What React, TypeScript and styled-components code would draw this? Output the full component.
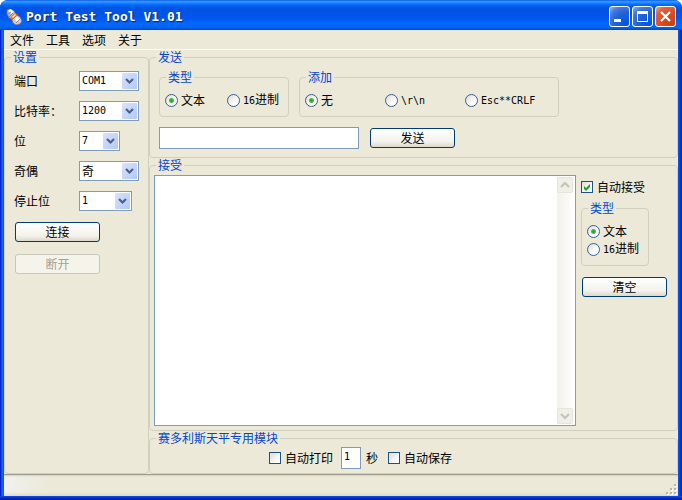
import React from "react";
import styled, { createGlobalStyle, css } from "styled-components";

const face = "#ece9d8";
const line = "#d0d0bf";
const fieldBorder = "#7f9db9";
const navy = "#003c74";
const caption = "#0046d5";
const cjk = '"Noto Sans CJK SC", sans-serif';
const mono = '"DejaVu Sans Mono", "Noto Sans CJK SC", monospace';

const GlobalStyle = createGlobalStyle`
  *, *::before, *::after { box-sizing: border-box; }
  body { margin: 0; background: #fff; font: 12px/16px ${cjk}; color: #000; }
  button, input, select, textarea { font: inherit; color: inherit; margin: 0; }
`;

const Window = styled.div`
  display: flex;
  flex-direction: column;
  min-height: 100vh;
  border-radius: 8px 8px 0 0;
  overflow: hidden;
  background: linear-gradient(90deg, #0019c8 0, #0831d9 1px, #166aee 2px, #0855dd 4px, #0855dd calc(100% - 4px), #0a4ee8 calc(100% - 3px), #0028c4 calc(100% - 1px), #001a9c 100%);
`;

const TitleBar = styled.header`
  display: flex;
  align-items: center;
  gap: 4px;
  height: 30px;
  padding: 3px 6px 0 6px;
  background: linear-gradient(180deg, #0058e6 0, #3a93ff 4%, #288eff 8%, #127dff 12%, #036ffc 15%, #0262ee 19%, #0057e5 24%, #0054e3 30%, #0055eb 56%, #005bf5 66%, #026afe 80%, #0062ef 92%, #0046c8 100%);
`;

const Title = styled.h1`
  flex: 1;
  margin: 0;
  font: bold 13px/16px ${mono};
  color: #fff;
  text-shadow: 1px 1px 1px #0a246a;
`;

const Controls = styled.div`
  display: flex;
  gap: 2px;
`;

const ControlButton = styled.button<{ $danger?: boolean }>`
  display: block;
  width: 21px;
  height: 21px;
  padding: 0;
  border: 1px solid #fff;
  border-radius: 3px;
  background: ${(p) =>
    p.$danger
      ? "radial-gradient(circle at 85% 90%, #cc3f10 0, #dd4a1c 45%, #e0603f 75%, #f0a58c 100%)"
      : "radial-gradient(circle at 85% 90%, #0054e9 0, #2263d5 50%, #4479e4 75%, #8fb2f4 100%)"};
  svg { display: block; }
`;

const Client = styled.main`
  display: flex;
  flex: 1;
  flex-direction: column;
  margin: 0 4px;
  background: ${face};
`;

const Menu = styled.nav`
  display: flex;
  gap: 12px;
  height: 20px;
  padding: 2px 6px;
  border-bottom: 1px solid #fff;
`;

const MenuItem = styled.button`
  padding: 0;
  border: 0;
  background: none;
  line-height: 16px;
`;

const Body = styled.div`
  display: grid;
  flex: 1;
  grid-template-columns: 145px 1fr;
`;

const Column = styled.div`
  display: flex;
  flex-direction: column;
  min-width: 0;
`;

const Group = styled.fieldset`
  min-width: 0;
  margin: 0;
  padding: 0;
  border: 1px solid ${line};
  border-radius: 4px;
`;

const Legend = styled.legend`
  margin-left: 6px;
  padding: 0 2px;
  line-height: 14px;
  color: ${caption};
`;

const SettingsContent = styled.div`
  padding: 7px 9px 0 9px;
`;

const SettingRow = styled.div`
  display: grid;
  grid-template-columns: 65px 1fr;
  align-items: center;
  height: 20px;
  margin-bottom: 10px;
`;

const Combo = styled.span<{ $size: "s" | "m" | "l" }>`
  display: flex;
  position: relative;
  width: ${(p) => ({ s: 41, m: 53, l: 60 })[p.$size]}px;
  svg { position: absolute; top: 2px; right: 2px; pointer-events: none; }
`;

const Select = styled.select<{ $latin?: boolean }>`
  appearance: none;
  width: 100%;
  height: 20px;
  padding: 0 16px 0 2px;
  border: 1px solid ${fieldBorder};
  border-radius: 0;
  background: #fff;
  font: ${(p) => (p.$latin ? `10px/18px ${mono}` : `12px/18px ${cjk}`)};
`;

const Buttons = styled.div`
  display: flex;
  flex-direction: column;
  gap: 12px;
  padding: 1px;
`;

const PushButton = styled.button`
  width: 85px;
  height: 20px;
  padding: 0;
  border: 1px solid ${navy};
  border-radius: 3px;
  background: linear-gradient(180deg, #fff, #f3f2ec 70%, #dcd8cb);
  line-height: 16px;
  &:disabled {
    border-color: #c9c7ba;
    background: #f5f4ea;
    color: #a1a192;
  }
`;

const SendContent = styled.div`
  padding: 6px 9px 8px 9px;
`;

const Row = styled.div`
  display: flex;
  gap: 10px;
  align-items: center;
`;

const SendRow = styled(Row)`
  margin-top: 10px;
`;

const Options = styled.div<{ $cols: string }>`
  display: grid;
  grid-template-columns: ${(p) => p.$cols};
  padding: 8px 5px;
`;

const StackedGroup = styled(Group)`
  width: 68px;
  margin: 6px 0 11px;
`;

const StackedOptions = styled.div`
  padding: 7px 5px;
`;

const Choice = styled.label<{ $tall?: boolean }>`
  display: flex;
  align-items: center;
  gap: 3px;
  height: ${(p) => (p.$tall ? 18 : 16)}px;
  white-space: nowrap;
`;

const Check = styled(Choice)`
  gap: 4px;
`;

const Latin = styled.span`
  font: 10px/16px ${mono};
`;

const RadioInput = styled.input`
  appearance: none;
  flex: none;
  width: 13px;
  height: 13px;
  border: 1px solid #336091;
  border-radius: 50%;
  background: linear-gradient(135deg, #dcdcd7, #fff 70%);
  &:checked {
    background: radial-gradient(circle at 50% 50%, #21a121 0, #3cc43c 2px, transparent 3px), linear-gradient(135deg, #dcdcd7, #fff 70%);
  }
`;

const CheckBox = styled.span`
  display: grid;
  width: 12px;
  height: 12px;
  > * { grid-area: 1 / 1; }
  svg { pointer-events: none; visibility: hidden; }
  input:checked + svg { visibility: visible; }
`;

const CheckInput = styled.input`
  appearance: none;
  width: 12px;
  height: 12px;
  border: 1px solid #1c5180;
  background: linear-gradient(135deg, #dcdcd7, #fff 80%);
`;

const field = css`
  height: 22px;
  border: 1px solid ${fieldBorder};
  border-radius: 0;
  background: #fff;
  outline: none;
`;

const MessageInput = styled.input`
  ${field}
  width: 200px;
  margin-right: 1px;
  padding: 0 3px;
`;

const SecondsInput = styled.input`
  ${field}
  width: 20px;
  margin: 0 5px 0 8px;
  padding: 0 2px 4px;
  font: 10px/16px ${mono};
`;

const ReceiveGroup = styled(Group)`
  display: flex;
  flex: 1;
  flex-direction: column;
`;

const ReceiveContent = styled.div`
  display: flex;
  flex: 1;
  gap: 5px;
  padding: 3px 0 4px 4px;
`;

const Output = styled.div`
  display: flex;
  flex: 1;
  min-width: 0;
  border: 1px solid ${fieldBorder};
  background: #fff;
`;

const OutputText = styled.textarea`
  flex: 1;
  min-width: 0;
  padding: 2px;
  border: 0;
  outline: none;
  resize: none;
  background: transparent;
`;

const ScrollTrack = styled.div`
  display: flex;
  flex-direction: column;
  justify-content: space-between;
  width: 17px;
  margin: 1px;
  background: linear-gradient(90deg, #f3f1ec, #fefefb);
`;

const ScrollButton = styled.button`
  width: 16px;
  height: 16px;
  padding: 0;
  border: 1px solid #e6e5dc;
  border-radius: 2px;
  background: #f1f0e8;
  svg { display: block; }
`;

const ReceiveSide = styled.div`
  width: 96px;
  padding-top: 4px;
`;

const ClearButton = styled(PushButton)`
  margin-left: 1px;
`;

const ModuleContent = styled.div`
  display: flex;
  align-items: center;
  padding: 2px 0 4px 119px;
`;

const SaveCheck = styled(Check)`
  margin-left: 10px;
`;

const StatusBar = styled.footer`
  display: flex;
  align-items: flex-end;
  justify-content: flex-end;
  height: 22px;
  margin: 0 4px;
  padding: 0 1px 1px;
  border-top: 1px solid #9d9b8c;
  background: linear-gradient(180deg, #d5d2c2 0, transparent 2px, transparent 17px, #dedac8 100%),
    linear-gradient(90deg, #f0f0ee, ${face} 48px);
`;

const BottomEdge = styled.div`
  height: 4px;
  background: linear-gradient(180deg, #0855dd, #0831d9 40%, #00138c);
`;

const PlugIcon = () => (
  <svg width="16" height="16" viewBox="0 0 16 16" aria-hidden="true">
    <path d="M1 1l3-1 4 2 2 3-4 5-3-1-2-4z" fill="#b9b5c4" stroke="#6d6482" strokeWidth=".7" />
    <path d="M2 1l3-1 3 3-3 2z" fill="#fff" />
    <path d="M2 5l3-2M3 8l4-4" stroke="#8a8396" />
    <path d="M4 9l5-5 3 2-5 6z" fill="#e07a1c" />
    <path d="M6 8l3-3 1 1-3 3z" fill="#fff0b0" />
    <path d="M6 11l5-5 3 2 2 4-2 3-4 1-3-2z" fill="#cfccd6" stroke="#6d6482" strokeWidth=".7" />
    <path d="M9 10l2-2 3 2-3 3z" fill="#fff" />
    <path d="M10 14l4-4" stroke="#8a8396" />
  </svg>
);

const ComboArrow = () => (
  <svg width="15" height="16" viewBox="0 0 15 16" aria-hidden="true">
    <defs>
      <linearGradient id="combo" x1="0" y1="0" x2="1" y2="1">
        <stop offset="0" stopColor="#d7e3fe" />
        <stop offset="1" stopColor="#b3c8f8" />
      </linearGradient>
    </defs>
    <rect width="15" height="16" rx="1" fill="url(#combo)" />
    <path d="M4 6l3.5 3.5L11 6" fill="none" stroke="#4d6185" strokeWidth="2.2" />
  </svg>
);

const ScrollArrow = ({ down }: { down?: boolean }) => (
  <svg width="14" height="14" viewBox="0 0 14 14" aria-hidden="true">
    <path d={down ? "M3 5l4 4 4-4" : "M3 9l4-4 4 4"} fill="none" stroke="#c5c4b8" strokeWidth="2.2" />
  </svg>
);

const Tick = () => (
  <svg width="12" height="12" viewBox="0 0 12 12" aria-hidden="true">
    <path d="M3 5v3l2 2 4-4V3L5 7z" fill="#21a121" />
  </svg>
);

const Grip = () => (
  <svg width="11" height="11" viewBox="0 0 11 11" aria-hidden="true">
    {[[8, 0], [4, 4], [8, 4], [0, 8], [4, 8], [8, 8]].map(([x, y]) => (
      <React.Fragment key={`${x}-${y}`}>
        <rect x={x + 1} y={y + 1} width="2" height="2" fill="#fff" />
        <rect x={x} y={y} width="2" height="2" fill="#b8b4a3" />
      </React.Fragment>
    ))}
  </svg>
);

const Radio = ({ name, checked, tall, children }: { name: string; checked?: boolean; tall?: boolean; children: React.ReactNode }) => (
  <Choice $tall={tall}>
    <RadioInput type="radio" name={name} defaultChecked={checked} />
    <span>{children}</span>
  </Choice>
);

const Box = ({ checked }: { checked?: boolean }) => (
  <CheckBox>
    <CheckInput type="checkbox" defaultChecked={checked} />
    <Tick />
  </CheckBox>
);

type Setting = { id: string; label: string; value: string; size: "s" | "m" | "l"; latin?: boolean };

const settings: Setting[] = [
  { id: "port", label: "端口", value: "COM1", size: "l", latin: true },
  { id: "baud", label: "比特率：", value: "1200", size: "l", latin: true },
  { id: "bits", label: "位", value: "7", size: "s", latin: true },
  { id: "parity", label: "奇偶", value: "奇", size: "l" },
  { id: "stop", label: "停止位", value: "1", size: "m", latin: true },
];

export default function App() {
  return (
    <>
      <GlobalStyle />
      <Window>
        <TitleBar>
          <PlugIcon />
          <Title>Port Test Tool V1.01</Title>
          <Controls>
            <ControlButton aria-label="Minimize">
              <svg width="19" height="19"><rect x="4" y="12" width="7" height="3" fill="#fff" /></svg>
            </ControlButton>
            <ControlButton aria-label="Maximize">
              <svg width="19" height="19">
                <path d="M4 4h11v11H4zM5 7v7h9V7z" fill="#fff" fillRule="evenodd" />
              </svg>
            </ControlButton>
            <ControlButton $danger aria-label="Close">
              <svg width="19" height="19"><path d="M5 5l9 9M14 5l-9 9" stroke="#fff" strokeWidth="2.2" /></svg>
            </ControlButton>
          </Controls>
        </TitleBar>
        <Client>
          <Menu>
            {["文件", "工具", "选项", "关于"].map((m) => (
              <MenuItem key={m}>{m}</MenuItem>
            ))}
          </Menu>
          <Body>
            <Group>
              <Legend>设置</Legend>
              <SettingsContent>
                {settings.map((s) => (
                  <SettingRow key={s.id}>
                    <label htmlFor={s.id}>{s.label}</label>
                    <Combo $size={s.size}>
                      <Select id={s.id} $latin={s.latin}>
                        <option>{s.value}</option>
                      </Select>
                      <ComboArrow />
                    </Combo>
                  </SettingRow>
                ))}
                <Buttons>
                  <PushButton>连接</PushButton>
                  <PushButton disabled>断开</PushButton>
                </Buttons>
              </SettingsContent>
            </Group>
            <Column>
              <Group>
                <Legend>发送</Legend>
                <SendContent>
                  <Row>
                    <Group>
                      <Legend>类型</Legend>
                      <Options $cols="62px 56px">
                        <Radio name="send-type" checked>文本</Radio>
                        <Radio name="send-type"><Latin>16</Latin>进制</Radio>
                      </Options>
                    </Group>
                    <Group>
                      <Legend>添加</Legend>
                      <Options $cols="80px 80px 88px">
                        <Radio name="append" checked>无</Radio>
                        <Radio name="append"><Latin>{"\\r\\n"}</Latin></Radio>
                        <Radio name="append"><Latin>Esc**CRLF</Latin></Radio>
                      </Options>
                    </Group>
                  </Row>
                  <SendRow>
                    <MessageInput type="text" aria-label="发送" />
                    <PushButton>发送</PushButton>
                  </SendRow>
                </SendContent>
              </Group>
              <ReceiveGroup>
                <Legend>接受</Legend>
                <ReceiveContent>
                  <Output>
                    <OutputText aria-label="接受" />
                    <ScrollTrack>
                      <ScrollButton disabled aria-label="Scroll up"><ScrollArrow /></ScrollButton>
                      <ScrollButton disabled aria-label="Scroll down"><ScrollArrow down /></ScrollButton>
                    </ScrollTrack>
                  </Output>
                  <ReceiveSide>
                    <Check><Box checked />自动接受</Check>
                    <StackedGroup>
                      <Legend>类型</Legend>
                      <StackedOptions>
                        <Radio name="receive-type" checked tall>文本</Radio>
                        <Radio name="receive-type" tall><Latin>16</Latin>进制</Radio>
                      </StackedOptions>
                    </StackedGroup>
                    <ClearButton>清空</ClearButton>
                  </ReceiveSide>
                </ReceiveContent>
              </ReceiveGroup>
              <Group>
                <Legend>赛多利斯天平专用模块</Legend>
                <ModuleContent>
                  <Check><Box />自动打印</Check>
                  <SecondsInput id="seconds" type="text" defaultValue="1" />
                  <label htmlFor="seconds">秒</label>
                  <SaveCheck><Box />自动保存</SaveCheck>
                </ModuleContent>
              </Group>
            </Column>
          </Body>
        </Client>
        <StatusBar><Grip /></StatusBar>
        <BottomEdge />
      </Window>
    </>
  );
}
